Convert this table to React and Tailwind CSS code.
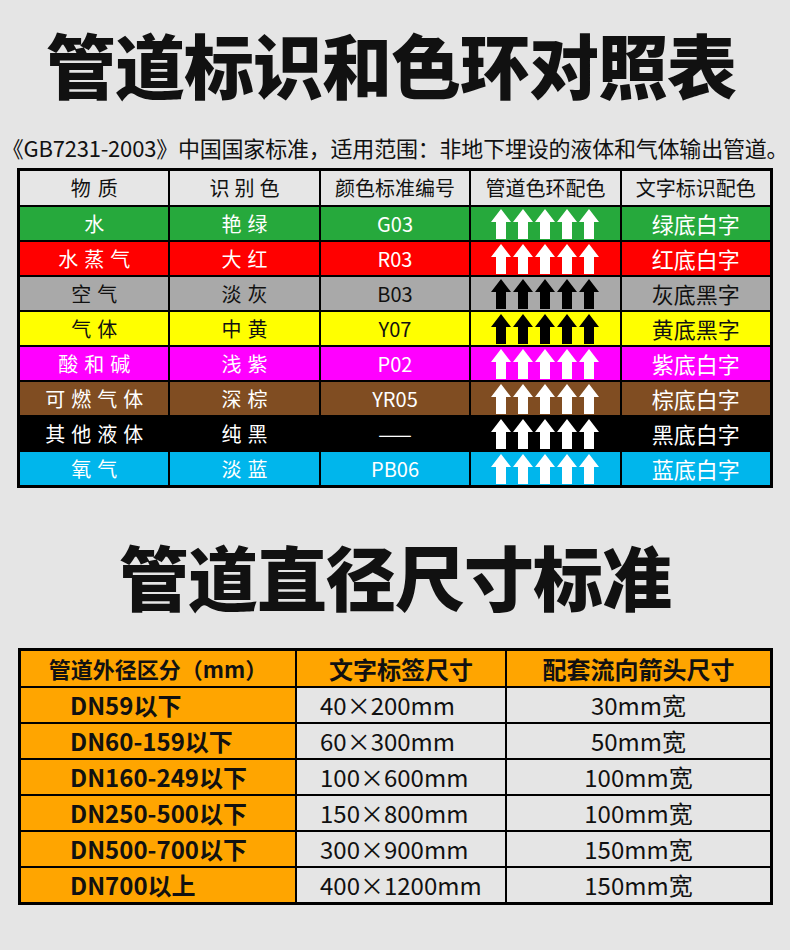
import React from "react";

const FONT = { fontFamily: '"Noto Sans CJK SC", "Noto Sans", sans-serif' };

function Arrow({ color }) {
  return (
    <svg width="20" height="30" viewBox="0 0 20 30">
      <polygon points="10,0 20,13 15,13 15,30 5,30 5,13 0,13" fill={color} />
    </svg>
  );
}

function Arrows({ color }) {
  return (
    <div className="flex items-center justify-center gap-[2px]">
      {[0, 1, 2, 3, 4].map((i) => (
        <Arrow key={i} color={color} />
      ))}
    </div>
  );
}

const rows = [
  { name: "水", color: "艳绿", code: "G03", text: "绿底白字", bg: "bg-[#26a93c]", fg: "text-white", arrow: "#ffffff" },
  { name: "水蒸气", color: "大红", code: "R03", text: "红底白字", bg: "bg-[#ff0000]", fg: "text-white", arrow: "#ffffff" },
  { name: "空气", color: "淡灰", code: "B03", text: "灰底黑字", bg: "bg-[#a9a9a9]", fg: "text-[#111111]", arrow: "#000000" },
  { name: "气体", color: "中黄", code: "Y07", text: "黄底黑字", bg: "bg-[#ffff00]", fg: "text-[#111111]", arrow: "#000000" },
  { name: "酸和碱", color: "浅紫", code: "P02", text: "紫底白字", bg: "bg-[#ff00ff]", fg: "text-white", arrow: "#ffffff" },
  { name: "可燃气体", color: "深棕", code: "YR05", text: "棕底白字", bg: "bg-[#804d22]", fg: "text-white", arrow: "#ffffff" },
  { name: "其他液体", color: "纯黑", code: "——", text: "黑底白字", bg: "bg-black", fg: "text-white", arrow: "#ffffff" },
  { name: "氧气", color: "淡蓝", code: "PB06", text: "蓝底白字", bg: "bg-[#00b6ec]", fg: "text-white", arrow: "#ffffff" },
];

const sizes = [
  ["DN59以下", "40×200mm", "30mm宽"],
  ["DN60-159以下", "60×300mm", "50mm宽"],
  ["DN160-249以下", "100×600mm", "100mm宽"],
  ["DN250-500以下", "150×800mm", "100mm宽"],
  ["DN500-700以下", "300×900mm", "150mm宽"],
  ["DN700以上", "400×1200mm", "150mm宽"],
];

export default function App() {
  return (
    <div className="w-[790px] h-[950px] bg-[#e5e5e5] overflow-hidden text-[#111111]" style={FONT}>
      <div className="h-[128px] flex items-center justify-center">
        <h1 className="text-[70px] leading-none font-black tracking-[-1px] pr-[8px]">管道标识和色环对照表</h1>
      </div>
      <div className="h-[38px] flex items-center justify-center">
        <p className="text-[22px] leading-none whitespace-nowrap tracking-[-0.2px]">《GB7231-2003》中国国家标准，适用范围：非地下埋设的液体和气体输出管道。</p>
      </div>

      <div className="mt-[2px] ml-[17px] w-[756px] border-[3px] border-black bg-black grid grid-cols-5 gap-[2px]">
        <div className="h-[34px] bg-[#e6e6e6] flex items-center justify-center text-[20px] tracking-[7px] pl-[7px]">物质</div>
        <div className="h-[34px] bg-[#e6e6e6] flex items-center justify-center text-[20px] tracking-[5px] pl-[5px]">识别色</div>
        <div className="h-[34px] bg-[#e6e6e6] flex items-center justify-center text-[20px]">颜色标准编号</div>
        <div className="h-[34px] bg-[#e6e6e6] flex items-center justify-center text-[20px]">管道色环配色</div>
        <div className="h-[34px] bg-[#e6e6e6] flex items-center justify-center text-[20px]">文字标识配色</div>
        {rows.map((r) => (
          <React.Fragment key={r.name}>
            <div className={`h-[33px] ${r.bg} ${r.fg} flex items-center justify-center text-[20px] tracking-[6px] pl-[6px]`}>{r.name}</div>
            <div className={`h-[33px] ${r.bg} ${r.fg} flex items-center justify-center text-[20px] tracking-[6px] pl-[6px]`}>{r.color}</div>
            <div className={`h-[33px] ${r.bg} ${r.fg} flex items-center justify-center text-[20px]`}>{r.code}</div>
            <div className={`h-[33px] ${r.bg} flex items-center justify-center`}>
              <Arrows color={r.arrow} />
            </div>
            <div className={`h-[33px] ${r.bg} ${r.fg} flex items-center justify-center text-[22px]`}>{r.text}</div>
          </React.Fragment>
        ))}
      </div>

      <div className="pt-[16px] h-[160px] flex items-center justify-center">
        <h2 className="text-[70px] leading-none font-black tracking-[-1px]">管道直径尺寸标准</h2>
      </div>

      <div className="ml-[18px] w-[755px] border-[3px] border-black bg-black grid grid-cols-[274px_208px_263px] gap-[2px]">
        <div className="h-[35px] bg-[#ffa500] flex items-center justify-center text-[22px] font-bold">管道外径区分（mm）</div>
        <div className="h-[35px] bg-[#ffa500] flex items-center justify-center text-[24px] font-bold">文字标签尺寸</div>
        <div className="h-[35px] bg-[#ffa500] flex items-center justify-center text-[24px] font-bold">配套流向箭头尺寸</div>
        {sizes.map((s) => (
          <React.Fragment key={s[0]}>
            <div className="h-[34px] bg-[#ffa500] flex items-center pl-[49px] text-[24px] font-bold">{s[0]}</div>
            <div className="h-[34px] bg-[#e5e5e5] flex items-center pl-[23px] text-[24px]">{s[1]}</div>
            <div className="h-[34px] bg-[#e5e5e5] flex items-center justify-center text-[24px]">{s[2]}</div>
          </React.Fragment>
        ))}
      </div>
    </div>
  );
}
